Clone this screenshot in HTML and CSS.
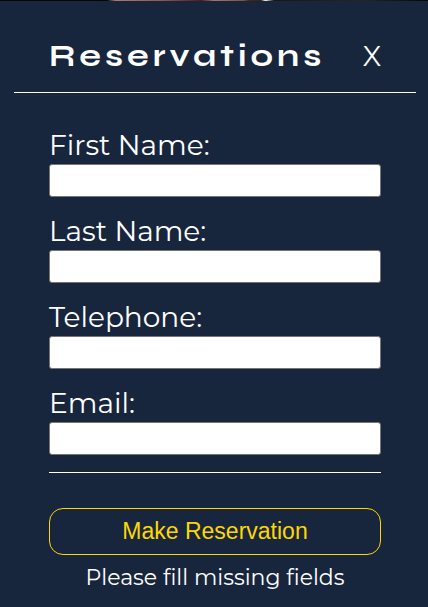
FILE: index.html
```html
<!DOCTYPE html>
<html lang="en">
<head>
<meta charset="utf-8">
<meta name="viewport" content="width=device-width, initial-scale=1">
<title>Reservations</title>
<link rel="stylesheet" href="styles.css">
</head>
<body>
<main class="panel">
  <header class="panel-header">
    <h1 class="title">Reservations</h1>
    <button class="close" type="button">X</button>
  </header>
  <form class="form">
    <div class="fields">
      <div class="field">
        <label for="first-name">First Name:</label>
        <input id="first-name" type="text">
      </div>
      <div class="field">
        <label for="last-name">Last Name:</label>
        <input id="last-name" type="text">
      </div>
      <div class="field">
        <label for="telephone">Telephone:</label>
        <input id="telephone" type="tel">
      </div>
      <div class="field">
        <label for="email">Email:</label>
        <input id="email" type="email">
      </div>
    </div>
    <button class="submit" type="submit">Make Reservation</button>
    <p class="message">Please fill missing fields</p>
  </form>
</main>
</body>
</html>
```
FILE: styles.css
```css
* {
  box-sizing: border-box;
}

body {
  margin: 0;
  min-height: 100vh;
  background: #18263d;
  color: #fff;
  font-family: Montserrat, Inter, sans-serif;
  font-size: 28px;
  line-height: 35px;
}

/* Sliver of the hero photo above the panel */
body::before {
  content: "";
  display: block;
  height: 1px;
  background: linear-gradient(90deg, #050303 0 25%, #b07868 27%, #94584a 38%, #783c34 42%, #5a1714 47%, #a87464 50%, #86503f 57%, #4a2a10 58%, #3a2008 61%, #f4f4e8 62%, #1c1510 64%, #2a2220 85%, #080606 100%);
}

.panel {
  padding: 0 12px 0 14px;
}

.panel-header {
  display: flex;
  align-items: baseline;
  justify-content: space-between;
  padding: 35px 35px 17px;
  border-bottom: 1px solid #fff;
}

.title {
  margin: 0;
  font-family: Syne, "DejaVu Sans", sans-serif;
  font-size: 32px;
  font-weight: 700;
  line-height: 39px;
  letter-spacing: 4px;
}

.close {
  padding: 0;
  border: 0;
  background: none;
  color: inherit;
  font: inherit;
  cursor: pointer;
}

.form {
  padding: 35px 35px 0;
}

.fields {
  display: grid;
  gap: 17px;
  padding-bottom: 17px;
  border-bottom: 1px solid #fff;
}

.field {
  display: grid;
  gap: 1px;
}

.field input {
  width: 100%;
  height: 33px;
  padding: 1px 6px;
  border: 1px solid #767676;
  border-radius: 3px;
  background: #fff;
  font-size: 22px;
}

.submit {
  display: block;
  width: 100%;
  height: 47px;
  margin-top: 35px;
  border: 1px solid #ffd700;
  border-radius: 14px;
  background: none;
  color: #ffd700;
  font-family: Arial, "Liberation Sans", sans-serif;
  font-size: 23px;
  cursor: pointer;
}

.message {
  margin: 9px 0 0;
  font-size: 22px;
  line-height: 28px;
  text-align: center;
}
```
